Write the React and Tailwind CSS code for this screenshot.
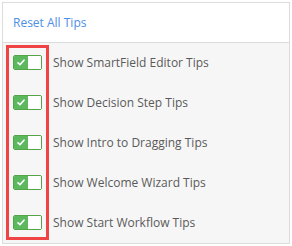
import React from "react";

const TIPS = [
  "Show SmartField Editor Tips",
  "Show Decision Step Tips",
  "Show Intro to Dragging Tips",
  "Show Welcome Wizard Tips",
  "Show Start Workflow Tips",
];

function Toggle() {
  return (
    <div className="flex h-[15px] w-[29px] shrink-0 overflow-hidden rounded-[2px] border border-[#52a447] bg-white">
      <span className="flex w-[14px] items-center justify-center bg-[#5cb85c]">
        <svg width="8" height="7" viewBox="0 0 8 7" fill="none">
          <path d="M1 3.8 L3 5.6 L7 1.2" stroke="#fff" strokeWidth="1.6" strokeLinecap="round" strokeLinejoin="round" />
        </svg>
      </span>
      <span className="flex-1 bg-white" />
    </div>
  );
}

export default function App() {
  return (
    <div className="h-[246px] w-[292px] bg-white p-[2px] font-['Open_Sans',sans-serif]">
      <div className="flex h-[242px] w-[288px] flex-col border border-[#dcdcdc]">
        <div className="flex h-[40px] shrink-0 items-center border-b border-[#dcdcdc] bg-white px-[10px] pt-[1px]">
          <span className="text-[12px] text-[#4d8fe8]">Reset All Tips</span>
        </div>
        <div className="relative flex min-h-0 flex-1 flex-col gap-[25px] bg-[#f6f6f6] px-[10px] pt-[12px]">
          {TIPS.map((t) => (
            <div key={t} className="flex items-center gap-[11px]">
              <Toggle />
              <span className="text-[12px] leading-[15px] text-[#5a5a5a]">{t}</span>
            </div>
          ))}
          <div className="pointer-events-none absolute left-[3px] top-[2px] h-[195px] w-[43px] border-[3px] border-[#f04444]" />
        </div>
      </div>
    </div>
  );
}
